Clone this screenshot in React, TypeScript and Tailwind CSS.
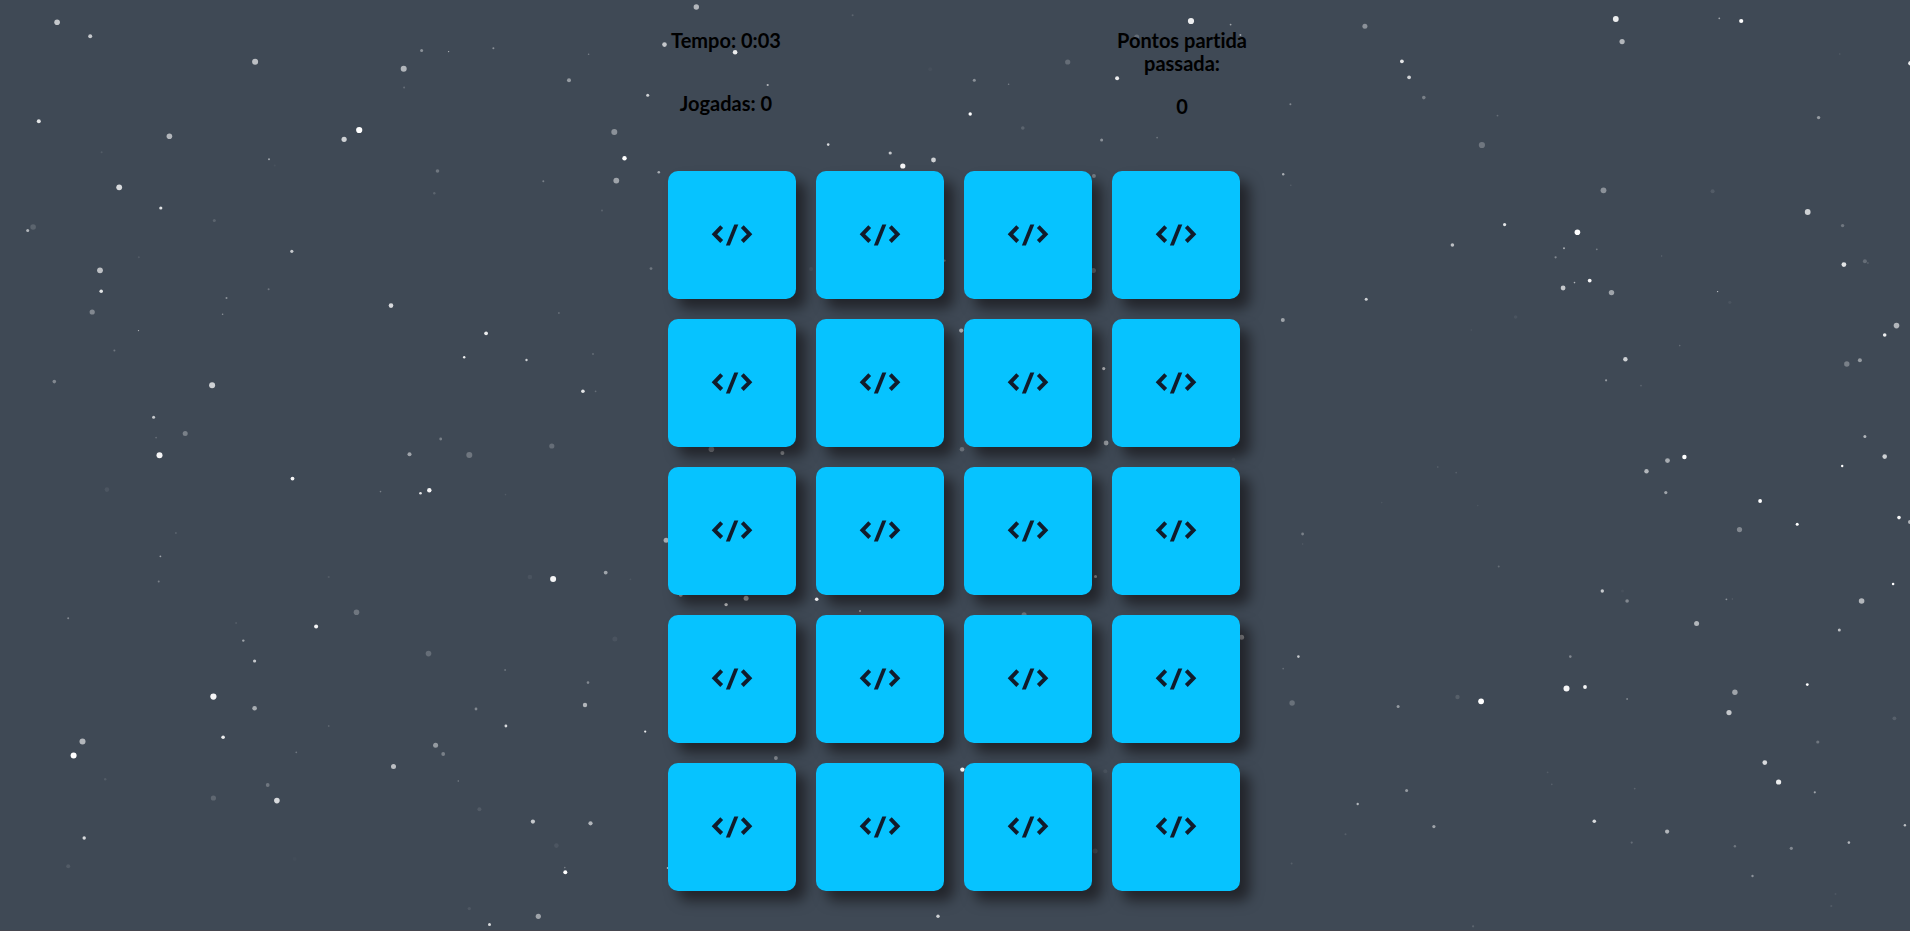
type Star = [x: number, y: number, radius: number, opacity: number];

const stars: Star[] = [
  [56.7,22,2.8,.7],[89.8,36,2,.7],[254.7,61.5,3,.65],[403.3,68.5,3,.6],[421.2,50.3,1.5,.4],[448.2,51.3,.7,.6],[493,48,1,.4],[588.2,54,.8,.3],[568.6,80,2,.45],[403.7,87.3,1,.2],
  [38.4,121,2,.85],[169,136,2.8,.6],[358.8,129.7,3.1,1],[343.7,139,2.6,.75],[613.9,131.7,3,.4],[624.1,158,2.2,1],[615.9,180.3,2.9,.5],[268.6,159,1,.5],[101.2,152,1,.1],[274.3,165.3,1,.05],
  [437.1,170.7,1.8,.25],[433.9,193,1.2,.15],[542.9,181,1,.3],[118.8,187,2.9,.8],[160.4,207.7,1.6,.85],[213.9,220.3,1.5,.15],[32.7,226.7,2.8,.15],[27.3,230.3,1.5,.6],[601.6,210.3,1,.15],
  [291.4,251,1.6,.7],[138.4,257,1,.1],[99.6,270,2.9,.65],[100.8,291,1.8,.85],[226.1,297.7,1,.4],[268.2,289,1,.25],[390.6,305.3,2.3,.8],
  [91.8,311.7,2.6,.35],[222.2,314,.8,.4],[138.1,330.3,.7,.6],[114,350.3,1,.25],[558.5,312.7,.9,.2],[485.7,333,1.9,.9],[463.8,357,1.2,.9],[526.1,359.7,1.2,.75],[592.6,353.7,.9,.2],
  [53.9,381.3,1.8,.35],[211.7,385,3,.75],[582.5,391,1.8,.85],[595.2,391,.9,.2],[153.2,417,1.5,.7],[184.8,433.3,2.5,.3],[155.7,437.3,.9,.2],[159.1,455,3,.95],[409.1,454,2,.5],[440.3,438.7,1.4,.3],
  [468.9,454.7,3,.25],[551.4,445.7,2.6,.2],[292.1,478.3,1.9,.95],[106.5,489.3,2.3,.07],[380.1,491.3,.8,.3],[428.9,490,2.2,.95],[420.1,493,1.3,.85],[505.1,494.3,.8,.1],[175.5,532.7,.9,.15],
  [160,556,.9,.5],[158.3,581.3,1,.3],[328.3,576.7,1.1,.1],[552.7,578.7,3,.95],[605.3,572.3,1.9,.5],[529.5,576.7,2.3,.06],[356.1,612,2.8,.25],[67.8,618,1,.35],[630,579,.9,.07],
  [235.7,622.7,1,.1],[315.7,626.3,2,.95],[242.9,640.3,1.2,.5],[254.2,660.7,1.6,.7],[428.1,653.3,2.8,.2],[614.5,638.7,2.5,.06],[213,696.3,3.1,.95],[254.2,708,2.3,.55],[504.7,669.7,.8,.4],
  [587.6,682.3,1.3,.35],[584.6,704.7,2.2,.6],[475.6,708.7,1.4,.35],[82.1,741.3,3,.6],[73.2,755.3,3,1],[222.7,737,1.8,.9],[328.3,725.7,.9,.15],[505.5,725.7,1.4,.8],[644.8,731.3,1.1,.9],
  [295.9,752,.9,.25],[435.2,745,2.5,.45],[442.8,753.7,1.9,.3],[393.1,766.3,2.5,.65],[104.8,779,1.2,.1],[267.3,784.7,1.9,.25],[213,797.7,2.6,.17],[276.5,800.3,2.8,.8],[457.9,780.7,.8,.3],
  [479,809,2,.1],[532.5,821.3,2.1,.7],[590.1,823,2.1,.6],[83.8,837.7,1.7,.8],[556,845.3,2.3,.07],[67.8,866,2,.1],[294.2,858.7,2,.02],[564.4,867.3,.8,.3],[564.9,872,2,1],[468.9,908.3,1.7,.08],
  [537.9,916,2.6,.5],[489.1,924.3,1.5,.8],
  [1364.5,26,2.5,.4],[1615.4,18.7,2.9,.9],[1718.9,18,.9,.5],[1740.8,20.7,2.1,1],[1621.7,41.3,2.6,.6],[1401.5,61,1.9,.85],[1408.7,77,1.9,.75],[1423.4,97.3,1.8,.3],[1290,104,1,.35],
  [1497.1,115.3,.9,.2],[1481.5,144.7,3.1,.25],[1818.2,117.3,1.7,.45],[1910,63,2.2,.9],[1839.3,53.7,.9,.07],[1282.8,174,1.2,.55],[1290.4,185,.8,.12],[1603.1,190,2.9,.4],[1712.2,191,2,.1],
  [1807.3,211.7,2.9,.75],[1842.2,225.3,1.7,.25],[1504.2,224.3,1.6,.85],[1577,232,2.8,1],[1452,244.7,1.8,.65],[1563.6,248,1,.55],[1596.4,249,.9,.3],[1555.2,257,1.1,.35],[1661.2,255.7,.8,.15],
  [1843.5,264.3,2.4,.85],[1864.5,261,2,.2],[1867.5,262.7,1,.12],[1562.7,287.7,2.4,.7],[1574.1,282.3,.8,.6],[1589.3,280.3,1.9,.95],[1611.1,292.3,2.7,.5],[1365.8,299,1.5,.75],[1717.2,291.3,.7,.7],[1729.4,302,1.6,.06],
  [1282.4,319.7,2,.5],[1515.2,316.7,1.8,.06],[1471,329.7,.9,.05],[1896.1,325.3,2.8,.6],[1884.3,334.7,1.8,.9],[1859.5,360,2,.45],[1846.4,363.7,2.7,.3],[1625,359,2.2,.75],[1679.3,345.3,.8,.2],
  [1605.7,380,1.1,.45],[1640.6,385.3,.9,.15],[1864.5,436.3,1.5,.6],[1884.3,456.3,2.3,.75],[1841.8,465.7,1.2,1],[1684,456.7,2.2,1],[1667.1,460.3,2.4,.55],[1646.1,471,2.2,.6],[1665.4,492.3,1.6,.5],
  [1437.3,466.7,.9,.1],[1455.8,472.3,.9,.12],[1381.3,502.3,.8,.07],[1477.3,505.3,.8,.07],[1759.7,500.7,1.9,1],[1796.8,524,1.5,1],[1739.1,529.3,2.6,.35],[1898.6,517.3,1.8,.95],[1909.6,521.7,2,.6],
  [1302.2,533.7,1.4,.3],[1302.2,543.7,.8,.1],[1498.3,566.3,1,.2],[1601.9,590.7,1.7,.7],[1622.1,590.7,1.5,.04],[1626.7,600.7,1.8,.35],[1726,599,.9,.4],[1732,598.7,.8,.12],[1892.7,583.7,1.3,1],[1861.2,600.7,2.8,.6],
  [1696.2,623.3,2.5,.6],[1838.9,629.7,1.5,.65],[1298,656.3,1.3,.7],[1282.8,668.3,.9,.2],[1291.7,702.7,2.7,.22],[1569.9,656.3,1.3,.35],[1566.1,688.3,3,.95],[1584.6,686.7,1.9,.95],[1626.7,698.7,.8,.55],
  [1457.1,696.7,2.2,.12],[1480.7,701,2.9,1],[1397.7,706.3,1.5,.45],[1734.5,692,2.7,.5],[1728.6,712.3,2.6,.7],[1806.9,684.3,1.4,1],[1894,718,1.9,.13],[1817.4,741.7,1.6,.25],[1764.4,762.3,2.4,.8],
  [1778.2,781.7,2.6,.9],[1814.4,792,1.1,.5],[1547.2,772,.9,.1],[1551.4,784,.9,.12],[1634.3,788.3,.9,.15],[1406.2,790.3,1.5,.45],[1357.3,803.7,1.2,.6],[1345.1,834,1,.12],[1433.5,826.3,1.6,.5],
  [1593.9,821,1.8,.8],[1666.7,831.3,2.1,.6],[1631.3,842.3,1.1,.2],[1734.5,846,1.2,.25],[1790.9,848,1.6,.35],[1848.5,842.3,1.3,.6],[1904.5,825,1.2,.65],[1291.2,863.3,1,.12],[1752.1,875.7,1.2,.4],
  [1835.1,893.7,1,.08],[1830.9,905.7,1.1,.1],[1472.7,926,1.1,.15],
  [695.9,6.7,2.7,.6],[852.2,15,1,.15],[664.1,44.3,2.3,.7],[734.7,52,2.3,.9],[767.3,84.7,1.1,.6],[647.3,95,1.5,.75],[929.8,69,2,.03],[973.9,80,1.5,.4],[1008.2,84,.8,.3],[1067.3,61.7,2.6,.2],
  [1116.7,78,2,.9],[1190.6,20.7,3.1,.9],[1230.2,24.3,.9,.5],[1240,34.7,1,.5],[1136.3,36.7,2.5,.2],[969.8,113.7,1.7,1],[1022.4,127.7,1.8,.15],[1101.2,139.7,1.5,.4],[1156.7,137.3,.9,.25],
  [827.8,144.3,1.3,.8],[889.8,152.7,1.6,.7],[902.4,165.7,2.6,.95],[933.1,159.7,2.4,.75],[658.4,172,1.3,.55],[1093.5,175.7,2,.3],[650.6,268.3,1.4,.25],[810.6,268.7,2,.06],[1093,270.3,2.5,.35],[944,260.3,1.2,.5],
  [960.8,330.3,2.1,.55],[1103.3,368.3,1.6,.7],[1105.7,442.7,2.4,.5],[711,449,2.8,.4],[782,452.7,2,.5],[961.6,449,2.3,.25],[1233,459,1.8,.04],[665.7,540,2.5,.55],[745.7,598,2.5,.7],[725.7,604.3,1.7,.8],
  [816.3,599,1.8,.95],[859.6,610.7,1,.45],[1095.1,576.3,1.5,.6],[680.4,594.5,2,.5],[1023.7,614.5,2.5,.25],
  [775.5,757.7,1.9,.4],[962,769.3,2.2,.95],[1104.9,771,2,.06],[1094.7,850.7,2.5,.15],[667.3,867.7,1,.6],[937.6,916,1.7,.75],[1241.2,637,2.5,.55],
];

function StarField() {
  return (
    <svg aria-hidden="true" className="pointer-events-none absolute inset-0 h-full w-full" fill="white">
      <g transform="translate(0.4 0.3)">
        {stars.map(([x, y, radius, opacity], i) => (
          <circle key={i} cx={x} cy={y} r={radius} opacity={opacity} />
        ))}
      </g>
    </svg>
  );
}

function CodeIcon() {
  return (
    <svg viewBox="0 0 42 24" aria-hidden="true" className="h-6 w-[42px]" fill="#111c2c">
      <path d="M.7 11.2 9.3 2.2 12.1 5.1 6.2 11.2 12.1 17.1 9.3 20 Z" />
      <path d="M23.3 1.5H27.3L18.9 22.5H14.9Z" />
      <path d="M41.3 11.2 32.7 2.2 29.9 5.1 35.8 11.2 29.9 17.1 32.7 20 Z" />
    </svg>
  );
}

function Card({ index }: { index: number }) {
  return (
    <button
      type="button"
      aria-label={`Carta ${index + 1}`}
      className="flex aspect-square cursor-pointer items-center justify-center rounded-[10px] bg-[#06c3ff] shadow-[10px_10px_13px_rgba(5,0,0,0.5)]"
    >
      <CodeIcon />
    </button>
  );
}

export default function App() {
  return (
    <div className="relative min-h-screen overflow-hidden border-b border-[#45464f] bg-[#3f4955] font-['Lato',sans-serif] text-black">
      <StarField />
      <main className="relative flex flex-col items-center pt-[29px] pr-0.5 pb-[39px]">
        <header className="flex w-full max-w-[600px] justify-between text-center text-xl leading-[23px] font-bold [font-variant-ligatures:none]">
          <div className="flex w-36 flex-col gap-10">
            <p>Tempo: 0:03</p>
            <p>Jogadas: 0</p>
          </div>
          <div className="flex w-36 flex-col gap-5">
            <p>Pontos partida passada:</p>
            <p>0</p>
          </div>
        </header>
        <section aria-label="Tabuleiro" className="mt-[53px] grid w-full max-w-[572px] grid-cols-4 gap-5">
          {Array.from({ length: 20 }, (_, i) => (
            <Card key={i} index={i} />
          ))}
        </section>
      </main>
    </div>
  );
}
